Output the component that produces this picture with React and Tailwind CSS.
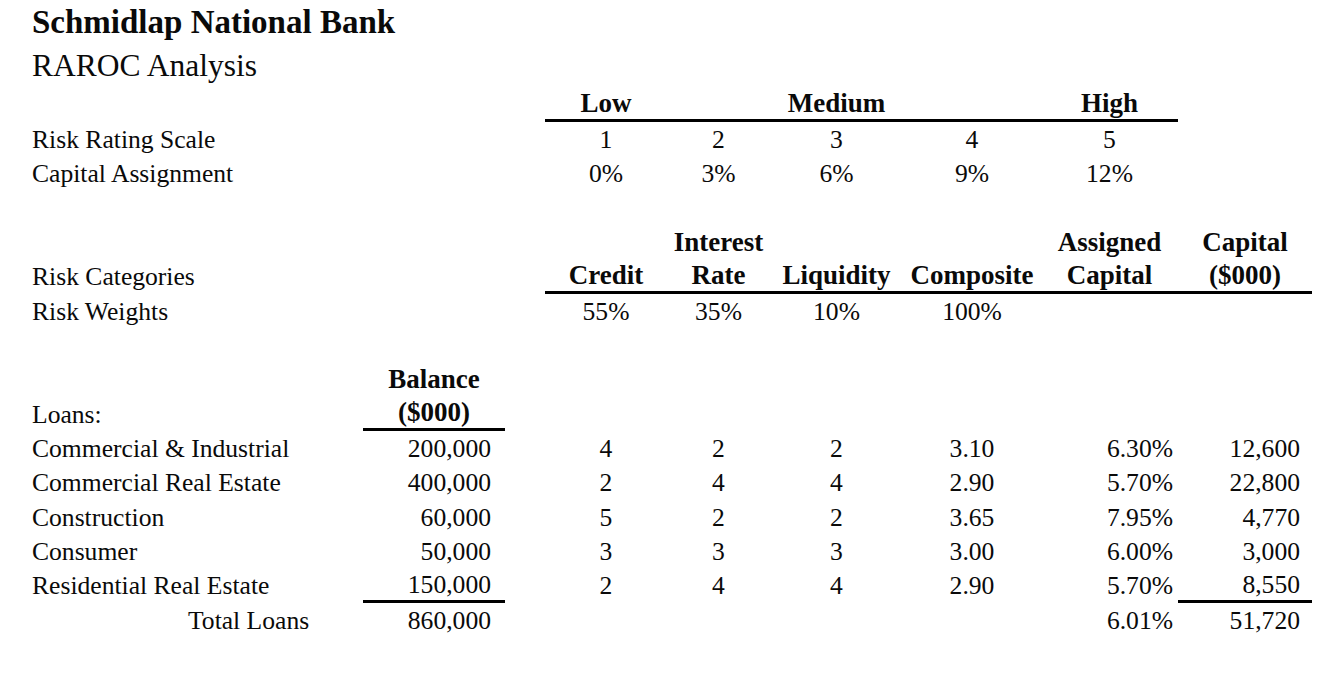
import React from 'react'

// column layout, spreadsheet style: label | balance | gap | credit | interest | liquidity | composite | assigned | capital
const colBase = [
  'justify-start pl-[32px]',
  'justify-end pr-[14px]',
  'justify-center',
  'justify-center',
  'justify-center',
  'justify-center',
  'justify-center',
  'justify-end pr-[5px]',
  'justify-end pr-[12px]'
]

// each cell: [text, opts] where opts: b = bold, c = centered, l = line below, i = indent
const rows = [
  [null, null, null, ['Low', 'bl'], [null, 'l'], ['Medium', 'bl'], [null, 'l'], ['High', 'blc'], null],
  ['Risk Rating Scale', null, null, '1', '2', '3', '4', ['5', 'c'], null],
  ['Capital Assignment', null, null, '0%', '3%', '6%', '9%', ['12%', 'c'], null],
  [null, null, null, null, null, null, null, null, null],
  [null, null, null, null, ['Interest', 'b'], null, null, ['Assigned', 'bc'], ['Capital', 'bc']],
  ['Risk Categories', null, null, ['Credit', 'bl'], ['Rate', 'bl'], ['Liquidity', 'bl'], ['Composite', 'bl'], ['Capital', 'blc'], ['($000)', 'blc']],
  ['Risk Weights', null, null, '55%', '35%', '10%', '100%', null, null],
  [null, null, null, null, null, null, null, null, null],
  [null, ['Balance', 'bc'], null, null, null, null, null, null, null],
  ['Loans:', ['($000)', 'blc'], null, null, null, null, null, null, null],
  ['Commercial & Industrial', '200,000', null, '4', '2', '2', '3.10', '6.30%', '12,600'],
  ['Commercial Real Estate', '400,000', null, '2', '4', '4', '2.90', '5.70%', '22,800'],
  ['Construction', '60,000', null, '5', '2', '2', '3.65', '7.95%', '4,770'],
  ['Consumer', '50,000', null, '3', '3', '3', '3.00', '6.00%', '3,000'],
  ['Residential Real Estate', ['150,000', 'l'], null, '2', '4', '4', '2.90', '5.70%', ['8,550', 'l']],
  [['Total Loans', 'i'], '860,000', null, null, null, null, null, '6.01%', '51,720']
]

function Cell({ cell, col }) {
  const [text, opts] = Array.isArray(cell) ? cell : [cell, '']
  const o = opts || ''
  const bold = o.includes('b')
  const line = o.includes('l')
  let align = colBase[col]
  if (o.includes('c')) align = 'justify-center'
  if (o.includes('i')) align = 'justify-start pl-[188px]'
  return (
    <div
      className={
        'flex items-center whitespace-nowrap ' +
        align +
        (line ? ' border-b-[3px] border-black' : '')
      }
    >
      {text != null && (
        <span className={bold ? 'font-bold text-[27px] leading-[25px]' : 'text-[25.6px] leading-[25px]'}>
          {text}
        </span>
      )}
    </div>
  )
}

export default function App() {
  return (
    <div
      className="w-full h-[675px] bg-white text-[#0a0a0a] overflow-hidden"
      style={{ fontFamily: '"Liberation Serif", "Times New Roman", serif' }}
    >
      <div className="h-[45px] pt-[6px] pl-[32px] text-[33px] leading-none font-bold">
        Schmidlap National Bank
      </div>
      <div className="h-[43px] pt-[5px] pl-[32px] text-[31.5px] leading-none">RAROC Analysis</div>

      <div className="grid grid-cols-[363px_142px_40px_122px_103px_133px_138px_137px_134px] auto-rows-[34.33px] w-[1312px]">
        {rows.map((row, r) =>
          row.map((cell, c) => <Cell key={r + '-' + c} cell={cell} col={c} />)
        )}
      </div>
    </div>
  )
}
